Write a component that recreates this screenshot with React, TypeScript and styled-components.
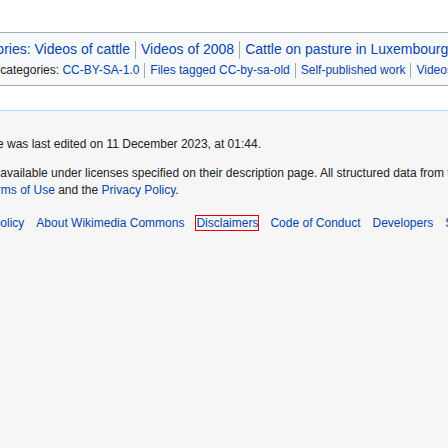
import React from "react";
import styled, { createGlobalStyle } from "styled-components";

const GlobalStyle = createGlobalStyle`
  html, body {
    margin: 0;
    padding: 0;
    background: #ffffff;
    overflow: hidden;
  }
  body {
    font-family: "Liberation Sans", Arial, sans-serif;
    color: #202122;
  }
`;

/* The page is wider than the window and shown scrolled a little to the right */
const ScrolledPage = styled.div`
  margin-left: -49px;
  width: 1800px;
`;

const Content = styled.div`
  padding: 32px 0 24px 2px;
`;

const CatLinks = styled.div`
  border: 1px solid #a2a9b1;
  background: #f8f9fa;
  padding: 5px;
`;

const CatRow = styled.div<{ $small?: boolean }>`
  font-size: ${(p) => (p.$small ? "12px" : "14px")};
  line-height: ${(p) => (p.$small ? "20px" : "22.4px")};
  white-space: nowrap;
`;

const CatLabel = styled.span<{ $link?: boolean }>`
  color: ${(p) => (p.$link ? "#0645ad" : "#202122")};
`;

const CatList = styled.span``;

const CatItem = styled.span`
  display: inline-block;
  line-height: 1.25em;
  padding: 0 5px;
  border-left: 1px solid #a2a9b1;
  color: #0645ad;
  &:first-child {
    padding-left: 0;
    border-left: none;
  }
`;

const Footer = styled.footer`
  border-top: 1px solid #a7d7f9;
  background: #f6f6f6;
  min-height: 400px;
  padding-top: 19px;
  font-size: 12px;
  color: #202122;
`;

const InfoList = styled.ul`
  list-style: none;
  margin: 0;
  padding: 0;
`;

const InfoItem = styled.li`
  padding: 6px 0;
  line-height: 16.8px;
  white-space: nowrap;
`;

const InfoLine = styled.span`
  display: block;
`;

const Link = styled.a`
  color: #0645ad;
  text-decoration: none;
`;

const Places = styled.ul`
  list-style: none;
  margin: 0;
  padding: 0;
  display: flex;
  gap: 12px;
  white-space: nowrap;
`;

const Place = styled.li`
  padding: 6px 0;
  line-height: 24px;
`;

const PlaceLink = styled.a<{ $focused?: boolean }>`
  color: #0645ad;
  text-decoration: none;
  outline: ${(p) => (p.$focused ? "1px solid #e00000" : "none")};
`;

const normalCats = ["Videos of cattle", "Videos of 2008", "Cattle on pasture in Luxembourg"];
const hiddenCats = [
  "CC-BY-SA-1.0",
  "Files tagged CC-by-sa-old",
  "Self-published work",
  "Videos without audio",
];
const places = [
  "Privacy policy",
  "About Wikimedia Commons",
  "Disclaimers",
  "Code of Conduct",
  "Developers",
  "Statistics",
  "Cookie statement",
  "Mobile view",
];

export default function App() {
  return (
    <>
      <GlobalStyle />
      <ScrolledPage>
        <Content>
          <CatLinks>
            <CatRow>
              <CatLabel $link>Categories</CatLabel>
              <CatLabel $link>: </CatLabel>
              <CatList>
                {normalCats.map((c) => (
                  <CatItem key={c}>{c}</CatItem>
                ))}
              </CatList>
            </CatRow>
            <CatRow $small>
              <CatLabel>Hidden categories: </CatLabel>
              <CatList>
                {hiddenCats.map((c) => (
                  <CatItem key={c}>{c}</CatItem>
                ))}
              </CatList>
            </CatRow>
          </CatLinks>
        </Content>
        <Footer>
          <InfoList>
            <InfoItem>This page was last edited on 11 December 2023, at 01:44.</InfoItem>
            <InfoItem>
              <InfoLine>
                Files are available under licenses specified on their description page. All structured data from the
                file namespace is available under the Creative Commons CC0 License; all unstructured text is available
                under the Creative Commons Attribution-ShareAlike License; additional terms may apply. By using this
                site, you agree
              </InfoLine>
              <InfoLine>
                to the <Link>Terms of Use</Link> and the <Link>Privacy Policy</Link>.
              </InfoLine>
            </InfoItem>
          </InfoList>
          <Places>
            {places.map((p) => (
              <Place key={p}>
                <PlaceLink $focused={p === "Disclaimers"}>{p}</PlaceLink>
              </Place>
            ))}
          </Places>
        </Footer>
      </ScrolledPage>
    </>
  );
}
